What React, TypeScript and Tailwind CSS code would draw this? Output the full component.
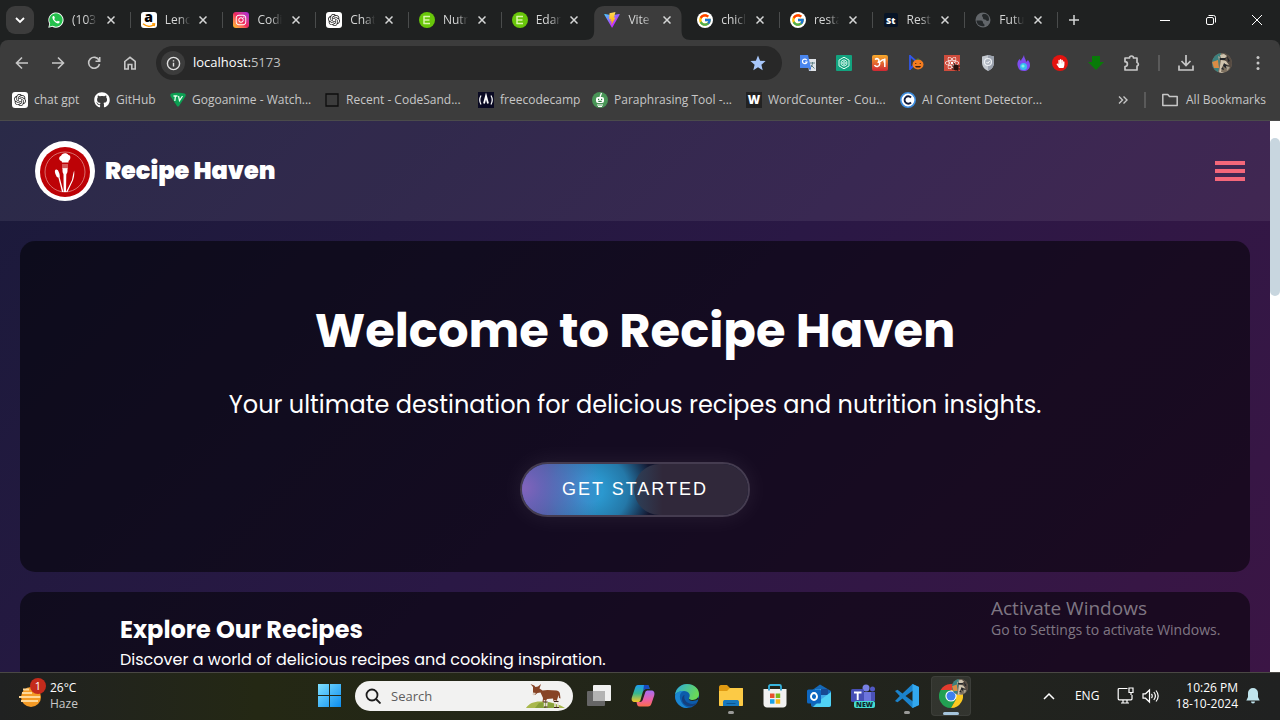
import type { ReactNode } from "react";
import { FaGithub, FaInstagram, FaReact, FaHandPaper } from "react-icons/fa";
import { FcGoogle } from "react-icons/fc";
import { SiOpenai } from "react-icons/si";

const GptIcon = () => (
  <span className="flex size-4 items-center justify-center rounded-[3px] bg-white text-[#222]">
    <SiOpenai size={12} />
  </span>
);

const WhatsAppIcon = () => (
  <svg viewBox="0 0 16 16" className="size-4">
    <path d="M.3 15.7l1-4A7.6 7.6 0 1 1 4.300 14.700z" fill="#fff" />
    <path d="M1.300 14.700l.9-3.200A6.700 6.700 0 1 1 4.600 13.800z" fill="#25c04d" />
    <path d="M5.300 4c-.6.200-1 1-.9 1.800.4 2.600 2.900 5.100 5.500 5.600 1 .1 1.900-.7 1.900-1.600 0-.3-1.700-1.200-2-1.100-.3.100-.7.900-1 .9-1.200-.4-2.200-1.400-2.600-2.500 0-.4.700-.7.7-1.100C6.900 5.700 6.200 4 5.900 4z" fill="#fff" />
  </svg>
);

const AmazonIcon = () => (
  <span className="flex size-4 flex-col items-center justify-center rounded-[3px] bg-white">
    <span className="h-[10px] font-['Open_Sans',sans-serif] text-[14px] leading-[8px] font-extrabold text-black">a</span>
    <svg viewBox="0 0 14 5" className="h-[5px] w-3.5">
      <path d="M1 .8c3.500 3 8 3 11 .8M10.200.8l2.300.1-.4 2.200" fill="none" stroke="#f90" strokeWidth="1.500" />
    </svg>
  </span>
);

const InstagramIcon = () => (
  <span className="flex size-4 items-center justify-center rounded-[3px] bg-linear-to-tr from-[#ffc400] via-[#f0245e] to-[#a81be0] text-white">
    <FaInstagram size={12} />
  </span>
);

const EdamamIcon = () => (
  <svg viewBox="0 0 16 16" className="size-4">
    <circle cx="8" cy="8" r="8" fill="#68c60a" />
    <path d="M4.500 4.500h6.500M4.500 8h6M4.500 11.500h6.500M5 4v8" stroke="#d8f5a8" strokeWidth="1.500" fill="none" />
  </svg>
);

const ViteIcon = () => (
  <svg viewBox="0 0 32 32" className="size-4">
    <defs>
      <linearGradient id="viteBody" x1="0" y1="0" x2=".6" y2=".7">
        <stop offset="0" stopColor="#41d1ff" />
        <stop offset="1" stopColor="#bd34fe" />
      </linearGradient>
      <linearGradient id="viteBolt" x1="0" y1="0" x2="0" y2="1">
        <stop offset="0" stopColor="#ffdd55" />
        <stop offset="1" stopColor="#ff9d00" />
      </linearGradient>
    </defs>
    <path d="M31.200 5.300L17 30.600a1 1 0 0 1-1.700 0L.8 5.300A1 1 0 0 1 1.800 3.800L16 6.300 30.200 3.800a1 1 0 0 1 1 1.500z" fill="url(#viteBody)" />
    <path d="M23 0L11 2.300l-.7 12.200 3.600-.6-1.400 5.200 3-.9-1 8.200 8.700-15.300-3.500.5z" fill="url(#viteBolt)" />
  </svg>
);

const GoogleIcon = () => (
  <span className="flex size-4 items-center justify-center rounded-full bg-white">
    <FcGoogle size={14} />
  </span>
);

const StIcon = () => (
  <span className="flex size-[14px] items-center justify-center rounded-[2px] bg-[#071426] font-['Open_Sans',sans-serif] text-[9px] leading-none font-extrabold text-white">
    St
  </span>
);

const GlobeIcon = () => (
  <svg viewBox="0 0 16 16" className="size-4">
    <circle cx="8" cy="8" r="7.500" fill="#62666a" />
    <path d="M1.500 8.500h4.500c1.500 0 2 1 2 2v1c1 0 1.500.5 1.500 2.500-4 1-8-1.500-8-5.500zM9 2c-1 0-2 .5-2 1.500S8 5 8 6s1 1.500 2 1.500 1 1.500 2.500 1.500S14 8 14 7c0-3-2-5-5-5z" fill="#24282a" />
  </svg>
);

const tabs: { label: string; icon: ReactNode; active?: boolean; divider?: boolean }[] = [
  { label: "(103", icon: <WhatsAppIcon />, divider: true },
  { label: "Lenc", icon: <AmazonIcon />, divider: true },
  { label: "Codi", icon: <InstagramIcon />, divider: true },
  { label: "Chat", icon: <GptIcon />, divider: true },
  { label: "Nutr", icon: <EdamamIcon />, divider: true },
  { label: "Edar", icon: <EdamamIcon /> },
  { label: "Vite", icon: <ViteIcon />, active: true },
  { label: "chicl", icon: <GoogleIcon />, divider: true },
  { label: "resta", icon: <GoogleIcon />, divider: true },
  { label: "Rest", icon: <StIcon />, divider: true },
  { label: "Futu", icon: <GlobeIcon />, divider: true },
];

const Cross = () => (
  <svg viewBox="0 0 8 8" className="size-2" fill="none" stroke="currentColor" strokeWidth="1.500">
    <path d="M.5.5l7 7M7.500.5l-7 7" />
  </svg>
);

function TabStrip() {
  return (
    <div className="flex h-10 items-center bg-[#1f2121] text-[#d5d6d6]">
      <button aria-label="Search tabs" className="ml-1.5 flex size-7 shrink-0 items-center justify-center rounded-[9px] bg-[#3c3c3c]">
        <svg viewBox="0 0 10 10" className="size-2.5" fill="none" stroke="#fff" strokeWidth="1.800">
          <path d="M1 3l4 4 4-4" />
        </svg>
      </button>
      <div role="tablist" className="ml-1 flex h-full min-w-0 flex-[0_1_1020px] items-center">
        {tabs.map((t, i) => (
          <div
            key={i}
            className={
              t.active
                ? "relative mt-1.5 flex h-[34px] min-w-0 flex-1 items-center self-start pb-1.5"
                : "relative flex h-full min-w-0 flex-1 items-center"
            }
          >
            {t.active && (
              <svg viewBox="0 0 104 34" preserveAspectRatio="none" className="absolute top-0 -left-[9px] h-[34px] w-[114%]">
                <path d="M0 34C6 34 9 31 9 25V10C9 4 13 0 19 0H85C91 0 95 4 95 10V25C95 31 98 34 104 34Z" fill="#3c3c3c" />
              </svg>
            )}
            <button role="tab" aria-selected={!!t.active} className="relative flex min-w-0 flex-1 items-center pl-2.5">
              <span className="flex size-4 shrink-0 items-center justify-center">{t.icon}</span>
              <span className="ml-2 w-7 text-left text-[12px] leading-4 whitespace-nowrap [mask-image:linear-gradient(to_right,black_50%,transparent_90%)]">
                {t.label}
              </span>
            </button>
            <button aria-label="Close tab" className="relative mr-4 shrink-0">
              <Cross />
            </button>
            {t.divider && <span className="absolute right-0 h-4 w-px bg-[#4a4c4c]" />}
          </div>
        ))}
      </div>
      <button aria-label="New tab" className="ml-0.5 flex size-7 shrink-0 items-center justify-center">
        <svg viewBox="0 0 10 10" className="size-2.5" stroke="currentColor" strokeWidth="1.500">
          <path d="M5 0v10M0 5h10" />
        </svg>
      </button>
      <div className="ml-auto flex h-full shrink-0 text-white">
        <button aria-label="Minimize" className="flex w-[46px] items-center justify-center">
          <svg viewBox="0 0 10 10" className="size-2.5" stroke="currentColor"><path d="M0 5.500h10" /></svg>
        </button>
        <button aria-label="Restore" className="flex w-[46px] items-center justify-center">
          <svg viewBox="0 0 10 10" className="size-2.5" fill="none" stroke="currentColor">
            <rect x=".5" y="2.500" width="7" height="7" rx="1.500" />
            <path d="M2.500.5h5a2 2 0 0 1 2 2v5" />
          </svg>
        </button>
        <button aria-label="Close window" className="flex w-[46px] items-center justify-center">
          <svg viewBox="0 0 10 10" className="size-2.5" stroke="currentColor"><path d="M0 0l10 10M10 0L0 10" /></svg>
        </button>
      </div>
    </div>
  );
}

const NavButton = ({ label, children }: { label: string; children: ReactNode }) => (
  <button aria-label={label} className="flex w-9 shrink-0 items-center justify-center text-[#c7c7c7]">
    <svg viewBox="0 0 16 16" className="size-4" fill="none" stroke="currentColor" strokeWidth="1.600">
      {children}
    </svg>
  </button>
);

const extensions: { label: string; icon: ReactNode }[] = [
  {
    label: "Translate",
    icon: (
      <svg viewBox="0 0 16 16" className="size-4">
        <path d="M7 4h9v12H9z" fill="#dfe3e8" />
        <path d="M10 8h5M12.500 7v1c0 2-1 4-2.500 5M11 10l3.500 3.500" stroke="#5d7f84" fill="none" />
        <path d="M0 0h8l3 13H0z" fill="#4a86ee" />
        <path d="M9 13h2l-1 3z" fill="#2860c8" />
        <path d="M6.800 5.200A2.300 2.300 0 1 0 7 7H5" stroke="#fff" strokeWidth="1.200" fill="none" />
      </svg>
    ),
  },
  {
    label: "Hexagon",
    icon: (
      <svg viewBox="0 0 16 16" className="size-4" fill="none" stroke="#e4fff4">
        <rect width="16" height="16" rx="1" fill="#12a37f" stroke="none" />
        <path d="M8 2.200l5 2.900v5.800l-5 2.900-5-2.900V5.100zM8 4.800l2.800 1.600v3.200L8 11.200 5.200 9.600V6.400z" />
        <circle cx="8" cy="8" r="1.300" />
      </svg>
    ),
  },
  {
    label: "Input tools",
    icon: (
      <svg viewBox="0 0 16 16" className="size-4">
        <defs>
          <linearGradient id="inputTools" x1="0" y1="0" x2="0" y2="1">
            <stop stopColor="#f7ab2b" /><stop offset="1" stopColor="#cf2733" />
          </linearGradient>
        </defs>
        <rect width="16" height="16" rx="2" fill="url(#inputTools)" />
        <path d="M3 4.500c2.500-2 5 0 3.500 2.500 1.500 0 2 4-1 4.500-1.500.2-2.500-.5-3-1.500M6 7.200c3 .5 3.500-3 5.500-2.500 1.500.5 1 2 0 2.500M12.800 3.500v8.500" fill="none" stroke="#fff" strokeWidth="1.500" />
      </svg>
    ),
  },
  {
    label: "Pumpkin",
    icon: (
      <svg viewBox="0 0 16 16" className="size-4">
        <path d="M2 0v15M2 1l7 6-7 7" stroke="#3157e8" strokeWidth="1.800" fill="none" />
        <ellipse cx="10" cy="9.500" rx="5.500" ry="5" fill="#f57c1f" />
        <path d="M10 5V3.500" stroke="#4d8b32" strokeWidth="1.500" />
        <path d="M7 8l2 1H7zm6 0l-2 1h2zm-6 3h6l-1 1.500H8z" fill="#3b1c10" />
      </svg>
    ),
  },
  {
    label: "React tools",
    icon: (
      <span className="relative flex size-4 items-center justify-center bg-[#cf4c3c] text-white">
        <FaReact size={14} />
        <svg viewBox="0 0 8 8" className="absolute right-0 bottom-0 size-2">
          <ellipse cx="4" cy="4.500" rx="2.500" ry="3" fill="#24120f" />
          <path d="M0 3h8M0 6h8M2 0l4 8" stroke="#24120f" />
        </svg>
      </span>
    ),
  },
  {
    label: "Shield",
    icon: (
      <svg viewBox="0 0 16 16" className="size-4">
        <path d="M2 1.500L8 0l6 1.500v6c0 4-2.500 7-6 8.500-3.500-1.500-6-4.500-6-8.500z" fill="#c3c8cf" />
        <path d="M8 0l6 1.500v6c0 4-2.500 7-6 8.500z" fill="#9ba2ae" />
        <circle cx="8" cy="7" r="3.500" fill="#aeb5c0" stroke="#eef1f5" strokeWidth="1.200" />
        <path d="M6.500 7l1.200 1.200 2-2.200" stroke="#fff" fill="none" />
      </svg>
    ),
  },
  {
    label: "Flame",
    icon: (
      <svg viewBox="0 0 16 16" className="size-4">
        <path d="M8 0c-1 3-3 4-3 6L3.500 4C1 7 1 9 2 12c1 3 3 4 6 4s6-2 6-6c0-3-1.500-4-2-5l-2 2C10 4 8 3 8 0z" fill="#7e4df0" />
        <circle cx="7.500" cy="11.500" r="3.500" fill="#39bdf1" />
        <circle cx="7" cy="11" r="1.600" fill="#7ff3e2" />
      </svg>
    ),
  },
  {
    label: "Ad blocker",
    icon: (
      <span className="flex size-4 items-center justify-center rounded-full bg-[#e3130f] text-white">
        <FaHandPaper size={9} />
      </span>
    ),
  },
  {
    label: "Downloader",
    icon: (
      <svg viewBox="0 0 16 16" className="size-4"><path d="M4 1h8v6h4l-8 8-8-8h4z" fill="#087a08" /></svg>
    ),
  },
  {
    label: "Extensions",
    icon: (
      <svg viewBox="0 0 18 18" className="size-[18px]" fill="none" stroke="#c7c7c7" strokeWidth="1.700">
        <path d="M2 4h4.500a2 2 0 0 1 4 0H14v4.500a1.800 1.800 0 0 1 0 3.500v4H2v-3.500a2.400 2.400 0 0 0 0-4.800z" strokeLinejoin="round" />
      </svg>
    ),
  },
];

const Avatar = ({ className }: { className: string }) => (
  <svg viewBox="0 0 20 20" className={className}>
    <defs><clipPath id="avatarClip"><circle cx="10" cy="10" r="10" /></clipPath></defs>
    <g clipPath="url(#avatarClip)">
      <rect width="20" height="20" fill="#7d705f" />
      <path d="M0 0h9L6 20H0z" fill="#3b807e" />
      <path d="M0 9l6-2 1 8H2z" fill="#d98c45" />
      <path d="M12 0l8 1v15l-6-2z" fill="#564b42" />
      <path d="M8 2l4-1 3 2-2 2H9zM9 7l5 1 3 4-5-1-2 3-1 5 4 1H7l1-7z" fill="#cfc3ae" />
      <path d="M7 5l7 0-1 2H8zM12 10l5 4-2 2-4-3zM15 3l3 5-2 1zM9 16l2-2 1 3z" fill="#25272b" />
      <path d="M14 13l4 1-3 4zM6 3l2 1-1 4z" fill="#a9a08e" />
    </g>
  </svg>
);

function Toolbar() {
  return (
    <div className="flex h-[46px] items-center rounded-t-lg bg-[#3c3c3c] pl-1">
      <NavButton label="Back"><path d="M14 8H3M8 2.500L2.500 8 8 13.500" /></NavButton>
      <NavButton label="Forward"><path d="M2 8h11M8 2.500L13.500 8 8 13.500" /></NavButton>
      <NavButton label="Reload">
        <path d="M13 5.200A5.500 5.500 0 1 0 13.500 9M13.700 2v4.200H9.500" />
      </NavButton>
      <NavButton label="Home">
        <path d="M2.800 6.500L8 2.300l5.200 4.200V14h-3.400V9.500H6.200V14H2.800z" />
      </NavButton>
      <div className="ml-2 flex h-[34px] min-w-0 flex-1 items-center rounded-full bg-[#282828] pr-4 pl-[5px]">
        <button aria-label="Site information" className="flex size-6 shrink-0 items-center justify-center rounded-full bg-[#3c3c3c]">
          <svg viewBox="0 0 16 16" className="size-[15px]" fill="none" stroke="#e0e0e0" strokeWidth="1.500">
            <circle cx="8" cy="8" r="6.500" />
            <path d="M8 7.200v4M8 4.400v1.500" />
          </svg>
        </button>
        <div className="ml-2 flex-1 text-[13px] text-[#c0c0c0]">
          <a href="#localhost"><span className="text-white">localhost:</span>5173</a>
        </div>
        <button aria-label="Edit bookmark">
          <svg viewBox="0 0 16 16" className="size-4">
            <path d="M8 .5l2.100 5.200 5.500.4-4.200 3.600 1.300 5.500L8 12.200l-4.700 3 1.300-5.500L.4 6.100l5.500-.4z" fill="#a8c7fa" />
          </svg>
        </button>
      </div>
      <div className="flex shrink-0 items-center pl-2">
        {extensions.map((e) => (
          <button key={e.label} aria-label={e.label} className="flex w-9 items-center justify-center">{e.icon}</button>
        ))}
        <span className="mx-2 h-4 w-0.5 bg-[#5a5a5a]" />
        <button aria-label="Downloads" className="flex w-9 items-center justify-center text-[#c7c7c7]">
          <svg viewBox="0 0 16 16" className="size-4" fill="none" stroke="currentColor" strokeWidth="1.700">
            <path d="M8 0v10M3.500 6L8 10.500 12.500 6M1 10.500V15h14v-4.500" />
          </svg>
        </button>
        <button aria-label="Profile" className="flex w-9 items-center justify-center"><Avatar className="size-5" /></button>
        <button aria-label="Menu" className="mr-1 flex w-9 items-center justify-center">
          <svg viewBox="0 0 4 16" className="h-4 w-1" fill="#c7c7c7">
            <circle cx="2" cy="2.500" r="1.500" /><circle cx="2" cy="8" r="1.500" /><circle cx="2" cy="13.500" r="1.500" />
          </svg>
        </button>
      </div>
    </div>
  );
}

function Bookmark({ icon, label, className }: { icon: ReactNode; label: string; className: string }) {
  return (
    <a href="#bookmark" className={className}>
      <span className="flex size-4 shrink-0 items-center justify-center">{icon}</span>
      <span className="whitespace-nowrap">{label}</span>
    </a>
  );
}

function BookmarksBar() {
  const wide = "flex w-[154px] shrink-0 items-center gap-1.5";
  return (
    <div className="flex h-[35px] items-center border-b border-[#4b4b4b] bg-[#3c3c3c] pb-1.5 pl-3 text-[12px] leading-4 text-[#c7c7c7]">
      <Bookmark className="flex w-[82px] shrink-0 items-center gap-1.5" icon={<GptIcon />} label="chat gpt" />
      <Bookmark className="flex w-[76px] shrink-0 items-center gap-1.5" icon={<FaGithub size={16} color="#fff" />} label="GitHub" />
      <Bookmark
        className={wide}
        label="Gogoanime - Watch..."
        icon={
          <svg viewBox="0 0 16 16" className="size-4">
            <path d="M1.500 1.500C5 .5 11 .5 14.500 1.500c1.500.5 1.500 2 .5 3.500l-6 9c-.6.800-1.400.8-2 0L1 5C0 3.500 0 2 1.500 1.500z" fill="#0c9f52" />
            <path d="M3.500 4h4M5.500 4L4.800 9M8.500 4l1 4.500L12.500 4" stroke="#e6fff0" strokeWidth="1.300" fill="none" />
          </svg>
        }
      />
      <Bookmark
        className={wide}
        label="Recent - CodeSand..."
        icon={<svg viewBox="0 0 16 16" className="size-4"><path d="M2 2h12v12H2z" fill="none" stroke="#0d0d0d" strokeWidth="1.300" /></svg>}
      />
      <Bookmark
        className="flex w-[114px] shrink-0 items-center gap-1.5"
        label="freecodecamp"
        icon={
          <svg viewBox="0 0 16 16" className="size-4" fill="none" stroke="#fff" strokeWidth="1.200">
            <rect width="16" height="16" fill="#0a0a23" stroke="none" />
            <path d="M3 3.500Q.5 8 3 12.500M13 3.500Q15.500 8 13 12.500" />
            <path d="M6 11.500L8 4l2 7.500" strokeWidth="1.800" />
          </svg>
        }
      />
      <Bookmark
        className={wide}
        label="Paraphrasing Tool -..."
        icon={
          <svg viewBox="0 0 16 16" className="size-4">
            <circle cx="8" cy="8" r="8" fill="#499557" />
            <rect x="4" y="5" width="8" height="6" rx="2" fill="#fff" />
            <path d="M8 5l1.500-4M5 13h6M6 14.500h4" stroke="#fff" strokeWidth="1.200" />
            <path d="M6 7.300h1.200M9 7.300h1.200M6.300 9.300h3.400" stroke="#2e7a42" strokeWidth="1.200" />
          </svg>
        }
      />
      <Bookmark
        className={wide}
        label="WordCounter - Cou..."
        icon={
          <span className="flex size-4 items-center justify-center bg-[#222] font-['Open_Sans',sans-serif] text-[12px] leading-none font-extrabold text-white">W</span>
        }
      />
      <Bookmark
        className={wide}
        label="AI Content Detector..."
        icon={
          <svg viewBox="0 0 16 16" className="size-4">
            <circle cx="8" cy="8" r="7.200" fill="#fff" stroke="#3d8de0" strokeWidth="1.600" />
            <path d="M11 5.500A3.700 3.700 0 1 0 11 10.500" fill="none" stroke="#10193a" strokeWidth="1.900" />
          </svg>
        }
      />
      <div className="ml-auto flex shrink-0 items-center pr-3.5">
        <button aria-label="More bookmarks">
          <svg viewBox="0 0 10 8" className="h-2 w-2.5" fill="none" stroke="currentColor" strokeWidth="1.400">
            <path d="M1 .5L4.500 4 1 7.500M5.500.5L9 4 5.500 7.500" />
          </svg>
        </button>
        <span className="mx-4 h-4 w-0.5 bg-[#5a5a5a]" />
        <button className="flex items-center gap-2">
          <svg viewBox="0 0 16 16" className="size-4" fill="none" stroke="currentColor" strokeWidth="1.500">
            <path d="M.8 2.500h5l1.700 2h7.700v9H.8z" strokeLinejoin="round" />
          </svg>
          All Bookmarks
        </button>
      </div>
    </div>
  );
}

const Logo = () => (
  <svg viewBox="0 0 60 60" className="size-[60px]">
    <circle cx="30" cy="30" r="30" fill="#fff" />
    <circle cx="30" cy="31" r="25" fill="#bd0206" />
    <circle cx="30" cy="31" r="20" fill="none" stroke="#e08a86" strokeWidth=".8" />
    <g fill="#fff">
      <path d="M26.500 20c-3-.5-3-4.500-.5-5 1-3.500 6-3.500 7.500-1 2.500 0 2.500 4.500 0 6v1.500h-6.500z" />
      <path d="M27.500 27h5v3c0 2-1 2.500-1.200 3.500L31 51h-2.300L28.500 33.500c0-1-1-1.500-1-3.500z" />
      <ellipse cx="22.300" cy="32.500" rx="2" ry="4.200" transform="rotate(-18 22.300 32.500)" />
      <path d="M23 35l1.200-.4L28.500 51H27zM37 39c1-5 1.500-8 2.200-9.500.4 4-.3 8-1.500 10.500L32.500 51H31z" />
    </g>
    <path d="M28 23v5M30 23v5M32 23v5" stroke="#f3c4c0" strokeWidth=".9" />
  </svg>
);

function RecipePage() {
  return (
    <div className="flex min-h-0 flex-1 overflow-hidden font-[Poppins,Inter,sans-serif] text-white">
      <div className="flex min-w-0 flex-1 flex-col bg-linear-135 from-[#1a1a3a] via-[#2a1845] to-[#3b1545]">
        <header className="flex h-[100px] shrink-0 items-center justify-between bg-white/7 pr-[25px] pl-[35px]">
          <a href="#home" className="flex items-center gap-2.5">
            <Logo />
            <span className="text-[24px] leading-9 font-black">Recipe Haven</span>
          </a>
          <button aria-label="Open menu" className="flex w-[30px] flex-col gap-1">
            <span className="h-1 bg-[#f4677a]" />
            <span className="h-1 bg-[#f4677a]" />
            <span className="h-1 bg-[#f4677a]" />
          </button>
        </header>
        <main className="flex flex-col gap-5 p-5">
          <section className="flex flex-col items-center rounded-[15px] bg-black/52 pt-[54px] pb-[55px] text-center">
            <h1 className="text-[48px] leading-[72px] font-bold">Welcome to Recipe Haven</h1>
            <p className="mt-5 text-[24px] leading-9">Your ultimate destination for delicious recipes and nutrition insights.</p>
            <button className="relative mt-[39px] h-[55px] w-[230px] overflow-hidden rounded-full border-2 border-[#453c50] bg-[#14162f] font-['Liberation_Sans',sans-serif] text-[18px] tracking-[2px] shadow-[0_0_24px_rgba(255,255,255,0.08)]">
              <span className="absolute inset-y-0 left-0 w-[150px] bg-[radial-gradient(ellipse_80px_70px_at_0px_24px,#8264bc_0%,#7264bdd0_25%,transparent_100%),radial-gradient(ellipse_64px_60px_at_68px_26px,#2b98cf_20%,#2478a8_60%,transparent_100%),linear-gradient(to_right,#4a5596_0%,transparent_60%)]" />
              <span className="absolute inset-y-0 right-0 w-[114px] rounded-l-full bg-linear-to-r from-[#2c4059] via-[#30283a] via-25% to-[#30283a]" />
              <span className="relative">GET STARTED</span>
            </button>
          </section>
          <section className="rounded-[15px] bg-black/52 px-[100px] pt-5 pb-12">
            <h2 className="text-[24px] leading-9 font-bold">Explore Our Recipes</h2>
            <p className="text-[16px] leading-6">Discover a world of delicious recipes and cooking inspiration.</p>
          </section>
        </main>
      </div>
      <div className="w-2.5 shrink-0 bg-white pt-[17px]">
        <div className="h-[158px] rounded-full bg-[#c8d6df]" />
      </div>
    </div>
  );
}

const apps: { label: string; icon: ReactNode; running?: boolean }[] = [
  {
    label: "Task view",
    icon: (
      <svg viewBox="0 0 24 24" className="size-6">
        <rect x="6" y="1" width="18" height="16" rx="1" fill="#f0f0f0" />
        <rect x="0" y="7" width="18" height="15" rx="1" fill="#666" />
        <path d="M6 7h12v10H6z" fill="#b3b3b3" />
      </svg>
    ),
  },
  {
    label: "Copilot",
    icon: (
      <svg viewBox="0 0 24 24" className="size-6">
        <defs>
          <linearGradient id="copilotL" x1="0" y1="0" x2="0" y2="1"><stop stopColor="#1d9cf0" /><stop offset=".5" stopColor="#39b98c" /><stop offset="1" stopColor="#f8c623" /></linearGradient>
          <linearGradient id="copilotR" x1="0" y1="0" x2="0" y2="1"><stop stopColor="#a66df5" /><stop offset=".6" stopColor="#ed5fa0" /><stop offset="1" stopColor="#fb6d4b" /></linearGradient>
        </defs>
        <path d="M7 1h9c2 0 2 1.500 2.500 4H15c-2 0-3 2-3.500 4L9.500 16c-.5 1.500-1 2-3 2H4c-3 0-4-2-3-5L4 4c.6-2 1.500-3 3-3z" fill="url(#copilotL)" />
        <path d="M13 1h3c2 0 2 1.500 2.500 4H15c-1.500 0-2.500 1-3 3z" fill="#1749c0" />
        <path d="M17.500 6.500H20c3 0 4 2 3.200 5L20.500 19.500c-.6 2-1.500 3-3.500 3H8.500c-2 0-2.300-1.500-3-4.500H9c2 0 2.600-1.500 3.200-3.500l2-6c.5-1.500 1.300-2 3.300-2z" fill="url(#copilotR)" />
      </svg>
    ),
  },
  {
    label: "Edge",
    icon: (
      <svg viewBox="0 0 24 24" className="size-6">
        <defs>
          <linearGradient id="edgeTop" x1="0" y1="0" x2="1" y2=".4"><stop stopColor="#2aa9e0" /><stop offset="1" stopColor="#69d957" /></linearGradient>
        </defs>
        <circle cx="12" cy="12" r="12" fill="#0c5cab" />
        <path d="M0 11C1 4 6 0 12 0c7 0 12 4.500 12 10 0 4-3 6-6.500 6-3 0-4-1-3.500-2 2-3 0-7-5-7-4 0-8 2-9 4z" fill="url(#edgeTop)" />
        <path d="M0 12c1-4 5-5.500 9-5-4 1-5 5-3.500 9 1.500 4.500 5 7 8.500 7.800C6 25 0 19 0 12z" fill="#1b86d1" />
        <path d="M9.500 11c-1.500 5 3 9 8 9 2 0 4-1 5-1.500L20 21c-6 3-13 0-13-6 0-2 1-3.500 2.500-4z" fill="#143f7d" />
        <path d="M22.500 15.500c-4 2.500-9 1.500-8.700-1 .2.800 1.700 1.500 3.700 1.500 2 0 4-.7 5.200-2.500L25 16z" fill="#262914" />
      </svg>
    ),
  },
  {
    label: "File Explorer",
    running: true,
    icon: (
      <svg viewBox="0 0 24 24" className="size-6">
        <path d="M0 3.500C0 2 .7 1 2 1h6l3 3h12c.7 0 1 .3 1 1v6H0z" fill="#e09a12" />
        <path d="M0 7h8l3-3h12c.7 0 1 .3 1 1v16c0 .7-.3 1-1 1H1c-.7 0-1-.3-1-1z" fill="#fcca45" />
        <path d="M4 22v-4c0-1.500 1-2 2-2h12c1 0 2 .5 2 2v4z" fill="#1878be" />
        <path d="M7.500 19.500h9" stroke="#0d5590" />
      </svg>
    ),
  },
  {
    label: "Store",
    icon: (
      <svg viewBox="0 0 24 24" className="size-6">
        <path d="M6 8V2.500C6 1.500 6.500 1 7.500 1h9c1 0 1.500.5 1.500 1.500V8" fill="none" stroke="#38b5de" strokeWidth="1.800" />
        <path d="M.5 5h23v15c0 2-1.500 3.500-3.500 3.500H4C2 23.500.5 22 .5 20z" fill="#f1f1f1" />
        <path d="M6 3v3.500M18 3v3.500" stroke="#2a9cc8" strokeWidth="1.800" />
        <path d="M7 9.500h4.500V14H7z" fill="#e8502d" /><path d="M12.700 9.500h4.500V14h-4.500z" fill="#7bb61b" />
        <path d="M7 15.200h4.500v4.500H7z" fill="#18a0e8" /><path d="M12.700 15.200h4.500v4.500h-4.500z" fill="#f6b517" />
      </svg>
    ),
  },
  {
    label: "Outlook",
    icon: (
      <svg viewBox="0 0 24 24" className="size-6">
        <path d="M4 7l9-6.500L24 7v14c0 1-1 2-2 2H6c-1 0-2-1-2-2z" fill="#1468b8" />
        <path d="M8 5h13v12H8z" fill="#3fa7e7" /><path d="M14 5h7v6h-7z" fill="#174a94" />
        <path d="M24 8v13c0 1-1 2-2 2H6l6-6z" fill="#50d2f5" />
        <rect y="5.500" width="14" height="14" rx="1.500" fill="#0d66c0" />
        <ellipse cx="7" cy="12.500" rx="3" ry="3.500" fill="none" stroke="#fff" strokeWidth="1.900" />
      </svg>
    ),
  },
  {
    label: "Teams",
    icon: (
      <span className="relative block size-6">
        <svg viewBox="0 0 24 24" className="size-6">
          <circle cx="15" cy="4" r="3.500" fill="#7780e3" /><circle cx="21.500" cy="5" r="2.500" fill="#5158c4" />
          <path d="M10 8h10v12H10z" fill="#6d75dd" /><path d="M20 8h4v9h-4z" fill="#4b52b8" />
          <rect y="5" width="13" height="13" rx="1.500" fill="#474fb5" />
          <path d="M3 8.500h7.500M6.700 8.500v7.500" stroke="#fff" strokeWidth="1.900" />
        </svg>
        <span className="absolute right-0 bottom-0 rounded-[2px] bg-[#43dcd1] px-0.5 font-['Open_Sans',sans-serif] text-[7px] leading-[7px] font-extrabold text-[#10252b]">NEW</span>
      </span>
    ),
  },
  {
    label: "Visual Studio Code",
    running: true,
    icon: (
      <svg viewBox="0 0 24 24" className="size-6">
        <path d="M17.500 0L7.500 9.500 2.500 5.700 0 7l4.800 5L0 17l2.500 1.300 5-3.800 10 9.500L24 21V3zM18 6.500v11L10.500 12z" fill="#1b83cc" fillRule="evenodd" />
        <path d="M17.500 0L24 3v18l-6.500 3z" fill="#32a8ef" />
      </svg>
    ),
  },
];

const ChromeIcon = () => (
  <svg viewBox="0 0 24 24" className="size-6">
    <path d="M12 12L1.600 6A12 12 0 0 1 22.400 6z" fill="#e33b2e" />
    <path d="M12 12L1.600 6A12 12 0 0 0 12 24l5.200-9z" fill="#22a052" />
    <path d="M12 12L22.400 6A12 12 0 0 1 12 24l5.200-9z" fill="#fbc920" />
    <path d="M12 6h10.400L17 15z" fill="#fbc920" /><path d="M1.600 6L7 15l5-9z" fill="#22a052" />
    <circle cx="12" cy="12" r="5.600" fill="#fff" /><circle cx="12" cy="12" r="4.500" fill="#3f7fee" />
  </svg>
);

const Okapi = () => (
  <svg viewBox="0 0 42 26" className="h-[26px] w-[42px] shrink-0">
    <path d="M1 25C4 20 10 18 17 18.500c9 0 18 3 23 6.500z" fill="#a9b84d" />
    <path d="M14 20c8-2 17 0 20 5H10z" fill="#87a038" />
    <path d="M8 4L5.500 1l3.700 1.600L10.500 4 13 3.500 16 1l-1.500 4.500 3 2 5-.5 9 .5c2.500.5 3.500 2 3.500 4l.5 4-1.500-.5-.5-3-1 3.500-1 3h-3l-.5-3-6 .5-1.500 3h-3L18 15l-2.500-5.500-3 .5-2.500 2-2-1z" fill="#874426" />
    <path d="M8 9.500l3 .5-2 2.500-1.500-1z" fill="#ddd0c2" />
    <path d="M19.500 17v7M22 18l-.5 6.500M30 17v7.500M32.500 17l.5 7" stroke="#e9e0d5" strokeWidth="1.500" />
    <path d="M18.500 19h4M29 18.500h4.500M19 24h3.500M29 24.500h5" stroke="#3b2017" strokeWidth="1.200" />
  </svg>
);

function Taskbar() {
  return (
    <footer className="grid h-12 shrink-0 grid-cols-[1fr_auto_1fr] items-center border-t border-[#4a4844] bg-linear-to-r from-[#202121] via-[#242814] via-20% to-[#202121] pb-0.5 text-[12px] leading-4 text-white">
      <button className="flex items-center gap-2 pl-[18px] text-left">
        <span className="relative block size-6">
          <svg viewBox="0 0 24 24" className="size-6">
            <circle cx="13" cy="13" r="10" fill="#f49a25" />
            <path d="M5 5.500h6M4 9h10M1 13h21M3 17h17" stroke="#ffd795" strokeWidth="1.800" />
          </svg>
          <span className="absolute -top-1.5 -right-1 flex size-4 items-center justify-center rounded-full bg-[#c42b1c] text-[11px] leading-none">1</span>
        </span>
        <span>
          <span className="block">26°C</span>
          <span className="block text-[#c9c9c9]">Haze</span>
        </span>
      </button>
      <div className="flex items-center">
        <button aria-label="Start" className="flex w-11 items-center justify-center">
          <svg viewBox="0 0 23 23" className="size-[23px]">
            <defs><linearGradient id="start" x1="0" y1="0" x2="1" y2="1"><stop stopColor="#7fe0ff" /><stop offset="1" stopColor="#0c8dee" /></linearGradient></defs>
            <path d="M0 0h11v11H0zM12 0h11v11H12zM0 12h11v11H0zM12 12h11v11H12z" fill="url(#start)" />
          </svg>
        </button>
        <label className="mx-1 flex h-[30px] w-[218px] items-center rounded-full bg-[#f2f2f1] pr-1.5 pl-2.5">
          <svg viewBox="0 0 16 16" className="size-4 shrink-0" fill="none" stroke="#1c1c1c" strokeWidth="1.800">
            <circle cx="7" cy="7" r="5.500" /><path d="M11 11l4.500 4.500" />
          </svg>
          <input aria-label="Search" placeholder="Search" className="ml-2.5 min-w-0 flex-1 bg-transparent text-[13px] text-black outline-none placeholder:text-[#5d5d5d]" />
          <Okapi />
        </label>
        {apps.map((a) => (
          <button key={a.label} aria-label={a.label} className="relative flex h-10 w-11 items-center justify-center">
            {a.icon}
            {a.running && <span className="absolute bottom-0.5 h-[3px] w-1.5 rounded-full bg-[#9a9a98]" />}
          </button>
        ))}
        <button aria-label="Chrome" className="relative mx-0.5 flex size-10 items-center justify-center rounded-[4px] border border-white/5 bg-white/8">
          <ChromeIcon />
          <Avatar className="absolute top-0.5 right-0.5 size-4" />
          <span className="absolute bottom-0 h-[3px] w-4 rounded-full bg-[#a6c5dc]" />
        </button>
      </div>
      <div className="flex items-center justify-end pr-5">
        <button aria-label="Hidden icons" className="mr-5">
          <svg viewBox="0 0 12 8" className="h-2 w-3" fill="none" stroke="currentColor" strokeWidth="1.500"><path d="M1 7l5-5 5 5" /></svg>
        </button>
        <button className="mr-[18px]">ENG</button>
        <button aria-label="Network and volume" className="mr-4 flex items-center gap-2">
          <svg viewBox="0 0 17 17" className="size-[17px]" fill="none" stroke="currentColor" strokeWidth="1.200">
            <path d="M10.500 1.500H2.200a1 1 0 0 0-1 1v9.300a1 1 0 0 0 1 1H14a1 1 0 0 0 1-1V8M4 16h8M6 13v3M10 13v3" />
            <path d="M12 1h4v4.500h-4zM14 5.500V8" />
          </svg>
          <svg viewBox="0 0 17 16" className="h-4 w-[17px]" fill="none" stroke="currentColor" strokeWidth="1.200">
            <path d="M1 5.800h2.500L7.500 2v12L3.500 10.200H1zM9.500 5.800c1 1.500 1 2.900 0 4.400M11.800 4c2 2.500 2 5.500 0 8M14 2.500c2.800 3.500 2.800 7.500 0 11" />
          </svg>
        </button>
        <button className="text-right">
          <span className="block">10:26 PM</span>
          <span className="block">18-10-2024</span>
        </button>
        <button aria-label="Notifications" className="ml-2">
          <svg viewBox="0 0 14 16" className="h-4 w-3.5" fill="#bfe3ec">
            <path d="M7 0a5 5 0 0 0-5 5v4l-1.700 3.500h13.400L12 9V5a5 5 0 0 0-5-5zM5 13.500a2 2 0 0 0 4 0z" />
          </svg>
        </button>
      </div>
    </footer>
  );
}

export default function App() {
  return (
    <div className="relative flex h-screen flex-col overflow-hidden bg-[#1f2121] font-['Segoe_UI','Open_Sans',sans-serif]">
      <TabStrip />
      <Toolbar />
      <BookmarksBar />
      <RecipePage />
      <Taskbar />
      <div className="pointer-events-none absolute right-[53px] bottom-[80px] w-[236px] whitespace-nowrap text-white/45">
        <p className="text-[19px] leading-6">Activate Windows</p>
        <p className="text-[14px] leading-5">Go to Settings to activate Windows.</p>
      </div>
    </div>
  );
}
